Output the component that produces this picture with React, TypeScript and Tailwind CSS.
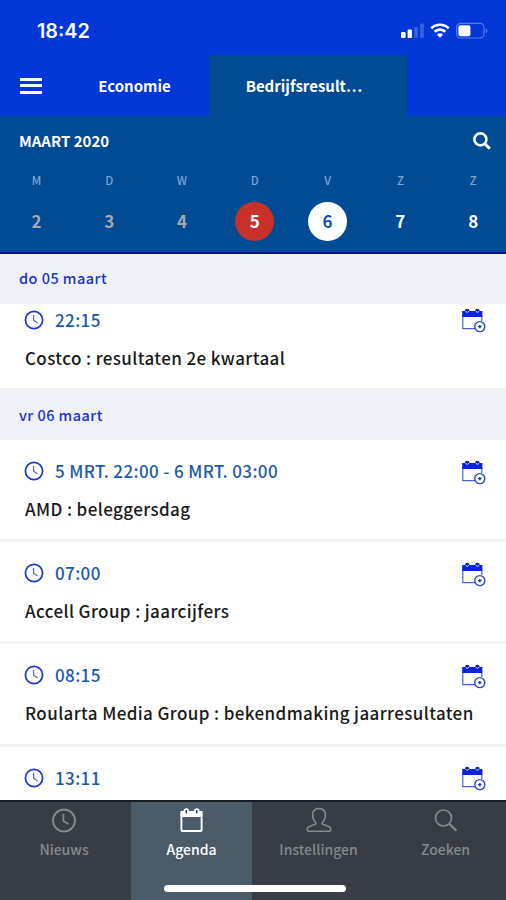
import React from 'react'
import clsx from 'clsx'

interface Day {
  letter: string
  date: number
  state: 'past' | 'today' | 'selected' | 'future'
}

interface AgendaItem {
  time: string
  title: string
}

const days: Day[] = [
  { letter: 'M', date: 2, state: 'past' },
  { letter: 'D', date: 3, state: 'past' },
  { letter: 'W', date: 4, state: 'past' },
  { letter: 'D', date: 5, state: 'today' },
  { letter: 'V', date: 6, state: 'selected' },
  { letter: 'Z', date: 7, state: 'future' },
  { letter: 'Z', date: 8, state: 'future' },
]

const friday: AgendaItem[] = [
  { time: '5 MRT. 22:00 - 6 MRT. 03:00', title: 'AMD : beleggersdag' },
  { time: '07:00', title: 'Accell Group : jaarcijfers' },
  { time: '08:15', title: 'Roularta Media Group : bekendmaking jaarresultaten' },
  { time: '13:11', title: '' },
]

const dayStyles = {
  past: 'text-[#a3aab0]',
  today: 'bg-[#c8322b] text-white',
  selected: 'bg-white text-[#0f55ab]',
  future: 'text-white',
}

function ClockIcon() {
  return (
    <svg width="20" height="20" viewBox="0 0 20 20" fill="none" stroke="#1c35cf">
      <circle cx="10" cy="10" r="8.6" strokeWidth="1.7" />
      <path d="M9.6 5v5.2l4 2.8" strokeWidth="1.2" stroke="#4a68c9" />
    </svg>
  )
}

function CalendarAddIcon() {
  return (
    <svg width="25" height="25" viewBox="0 0 25 25" fill="none">
      <path d="M1.8 8v12.6H14M20.8 8v5" stroke="#4a62d6" strokeWidth="1.2" />
      <path d="M1.2 3h20.2v6H1.2z" fill="#0a24d6" />
      <circle cx="6.2" cy="3" r="2.3" fill="#0a24d6" />
      <circle cx="16.4" cy="3" r="2.3" fill="#0a24d6" />
      <path d="M4.8 3.2a1.5 1.5 0 0 0 2.9 0M15 3.2a1.5 1.5 0 0 0 2.9 0" stroke="#fff" strokeWidth=".8" />
      <circle cx="18.8" cy="18.6" r="5" fill="#fff" stroke="#2b48d0" strokeWidth="1.4" />
      <path d="M18.8 16.9v3.4M17.1 18.6h3.4" stroke="#1233cf" strokeWidth="1.4" />
    </svg>
  )
}

function StatusBar() {
  return (
    <div className="flex h-[55px] items-start justify-between pl-[37px] pr-[17px]">
      <div className="mt-[19px] font-['Inter'] text-[19.8px] font-semibold leading-6">18:42</div>
      <svg className="mt-[22px]" width="88" height="18" viewBox="0 0 88 18" fill="#fff">
        <rect x="0" y="10" width="4.6" height="6" rx="1.2" />
        <rect x="6.6" y="7.6" width="4.4" height="8.4" rx="1.2" />
        <rect x="13" y="5" width="4" height="11" rx="1.2" opacity=".2" />
        <rect x="19" y="1.6" width="4" height="14.4" rx="1.2" opacity=".2" />
        <g fill="none" stroke="#fff" strokeWidth="2.6">
          <path d="M30.3 6.2a12.6 12.6 0 0 1 17.4 0" />
          <path d="M33.6 9.8a7.8 7.8 0 0 1 10.8 0" />
        </g>
        <path d="M39 15.8l-3-3a4.3 4.3 0 0 1 6 0z" />
        <rect x="55.6" y="1.4" width="27.4" height="14.6" rx="4" fill="none" stroke="#fff" strokeOpacity=".35" strokeWidth="1.2" />
        <rect x="57.4" y="3.2" width="12" height="11" rx="2" />
        <path d="M84.8 6.6v4.6c2-.6 2-4 0-4.6z" opacity=".4" />
      </svg>
    </div>
  )
}

function DateHeading({ children }: { children: React.ReactNode }) {
  return (
    <h2 className="flex h-[49.5px] shrink-0 items-center bg-[#eff1f6] pb-px pl-[19px] text-[14.5px] font-medium tracking-[0.45px] text-[#1d33c4]">
      {children}
    </h2>
  )
}

function AgendaRow({ item, compact }: { item: AgendaItem; compact?: boolean }) {
  return (
    <div
      className={clsx(
        'shrink-0 border-b-[3px] border-[#f3f3f4] pl-[25px] pr-5',
        compact ? 'h-[87px] pt-[3px]' : 'h-[102.2px] pt-[18px]',
      )}
    >
      <div className="flex h-[26px] items-center">
        <div className="-ml-px">
          <ClockIcon />
        </div>
        <span className="ml-[11px] text-[17px] font-medium leading-[26px] tracking-[0.38px] text-[#1c5aa9]">{item.time}</span>
        <div className="ml-auto mt-0.5">
          <CalendarAddIcon />
        </div>
      </div>
      <div className="mt-3 h-[26px] whitespace-nowrap text-[17px] font-medium leading-[26px] tracking-[0.39px] text-[#191919]">
        {item.title}
      </div>
    </div>
  )
}

function NavTab({ label, active, children }: { label: string; active?: boolean; children: React.ReactNode }) {
  return (
    <div
      className={clsx(
        'flex flex-col items-center pt-[5px]',
        active ? 'bg-[#4b5b67] text-white' : 'text-[#858a8e]',
      )}
    >
      <svg width="28" height="28" viewBox="0 0 28 28" fill="none" stroke="currentColor" strokeWidth="1.7">
        {children}
      </svg>
      <span className="mt-[2px] text-[14px] font-medium leading-6">{label}</span>
    </div>
  )
}

function App() {
  return (
    <div className="flex h-[900px] w-[506px] flex-col overflow-hidden bg-white font-['Noto_Sans_CJK_SC','Noto_Sans',sans-serif]">
      <header className="shrink-0 bg-[#0037d6] text-white">
        <StatusBar />
        <div className="flex h-[61px] text-[15px] font-bold">
          <div className="flex w-[60px] flex-col justify-center gap-[3.5px] pl-5">
            <div className="h-[3px] w-[22px] bg-white" />
            <div className="h-[3px] w-[22px] bg-white" />
            <div className="h-[3px] w-[22px] bg-white" />
          </div>
          <div className="flex w-[149px] items-center justify-center pt-px">Economie</div>
          <div className="flex w-[198px] items-center justify-center bg-[#004b93] pr-2 pt-px">Bedrijfsresult…</div>
        </div>
      </header>

      <section className="h-[138px] shrink-0 overflow-hidden border-b-2 border-[#000d8c] bg-[#004b93] text-white">
        <div className="flex h-[49px] items-center justify-between pl-[19px] pr-[14px]">
          <h1 className="pt-px text-[15px] font-bold">MAART 2020</h1>
          <svg width="20" height="20" viewBox="0 0 20 20" fill="none" stroke="#fff">
            <circle cx="8.4" cy="8.4" r="6" strokeWidth="2.6" />
            <path d="M12.8 12.8l5 5" strokeWidth="3" />
          </svg>
        </div>
        <div className="flex">
          {days.map((day) => (
            <div key={day.date} className="flex w-[72.8px] shrink-0 flex-col items-center">
              <div className="h-[30px] text-[11.5px] font-medium leading-[30px] text-[#7fa5d2]">{day.letter}</div>
              <div
                className={clsx(
                  'mt-[6.5px] flex size-[39px] items-center justify-center rounded-full text-[17px] font-bold',
                  dayStyles[day.state],
                )}
              >
                {day.date}
              </div>
            </div>
          ))}
        </div>
      </section>

      <main className="flex min-h-0 flex-1 flex-col overflow-hidden">
        <DateHeading>do 05 maart</DateHeading>
        <AgendaRow item={{ time: '22:15', title: 'Costco : resultaten 2e kwartaal' }} compact />
        <DateHeading>vr 06 maart</DateHeading>
        {friday.map((item) => (
          <AgendaRow key={item.time} item={item} />
        ))}
      </main>

      <footer className="relative h-[100px] shrink-0 border-t-2 border-[#161d25] bg-[#383d45]">
        <div className="grid h-full grid-cols-[128px_3px_121px_133px_121px]">
          <NavTab label="Nieuws">
            <circle cx="14" cy="13.5" r="11" strokeWidth="1.9" />
            <path d="M13.4 7v7l5 3" />
          </NavTab>
          <div />
          <NavTab label="Agenda" active>
            <rect x="3.4" y="6" width="20.2" height="18" rx="1" strokeWidth="1.9" />
            <path d="M2.5 4h22v6h-22z" fill="currentColor" stroke="none" />
            <circle cx="8.3" cy="4" r="2.8" fill="currentColor" stroke="none" />
            <circle cx="18.7" cy="4" r="2.8" fill="currentColor" stroke="none" />
            <path d="M8.3 3v3.6M18.7 3v3.6" stroke="#35404a" strokeWidth="1.5" />
          </NavTab>
          <NavTab label="Instellingen">
            <path
              d="M14 1.5c-4.4 0-6.4 2.8-6.4 6.6 0 3 1.2 5.4 2.8 7 .8.8.6 2-.6 2.5-2.7 1.1-7.6 1.5-7.6 4.6 0 1.4.6 2 1.6 2h20.4c1 0 1.6-.6 1.6-2 0-3.1-4.9-3.5-7.6-4.6-1.2-.5-1.4-1.7-.6-2.5 1.6-1.6 2.8-4 2.8-7 0-3.8-2-6.6-6.4-6.6z"
              strokeWidth="1.6"
            />
          </NavTab>
          <NavTab label="Zoeken">
            <circle cx="11.5" cy="11" r="8" />
            <path d="M17.2 16.7l7.3 7" strokeWidth="2.2" />
          </NavTab>
        </div>
        <div className="absolute bottom-2 left-[164px] h-[7px] w-[182px] rounded-full bg-white" />
      </footer>
    </div>
  )
}

export default App
